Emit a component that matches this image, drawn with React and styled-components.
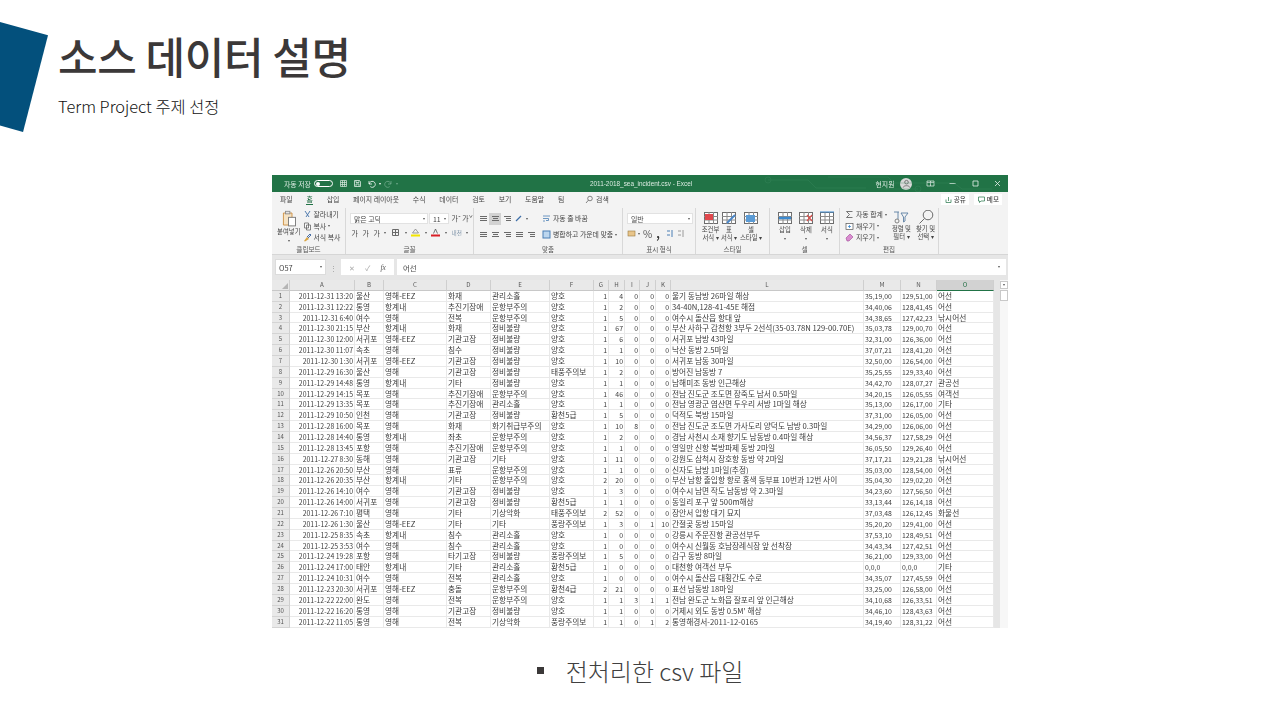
import styled, { createGlobalStyle } from "styled-components";

const GlobalStyle = createGlobalStyle`
  html, body {
    margin: 0;
    background: #fff;
  }
  body {
    font-family: "Noto Sans CJK KR", "Noto Sans", sans-serif;
  }
`;

const Page = styled.div`
  width: 1280px;
  height: 720px;
  overflow: hidden;
  display: flex;
  flex-direction: column;
`;

const Header = styled.header`
  height: 175px;
  padding-top: 22px;
  box-sizing: border-box;
  display: flex;
  align-items: flex-start;
`;

const Logo = styled.div`
  width: 48px;
  height: 110px;
  background: #03507c;
  clip-path: polygon(0 0, 100% 12%, 48% 100%, 0 94%);
`;

const Heading = styled.div`
  margin: 2px 0 0 10px;
  color: #3b3838;
`;

const Title = styled.h1`
  margin: 0;
  font-size: 43px;
  line-height: 62px;
  font-weight: 500;
  letter-spacing: -0.4px;
`;

const Subtitle = styled.p`
  margin: 8px 0 0;
  font-size: 16.4px;
  line-height: 24px;
  font-weight: 300;
  color: #111;
`;

const Window = styled.section`
  width: 736px;
  height: 453px;
  margin: 0 auto;
  flex: none;
  overflow: hidden;
  background: #e6e6e6;
  display: flex;
  flex-direction: column;
  font-size: 6.9px;
  color: #444;
  filter: blur(0.25px);
`;

const TitleBar = styled.div`
  position: relative;
  height: 17px;
  flex: none;
  background: #217346;
  color: #dcebe2;
  display: flex;
  align-items: center;
  padding: 0 6px 0 12px;
`;

const Circuit = styled.svg`
  position: absolute;
  right: 10px;
  top: 0;
  opacity: 0.35;
`;

const TitleLeft = styled.div`
  width: 306px;
  display: flex;
  align-items: center;
  gap: 5px;
`;

const DocName = styled.div`
  flex: 1;
  font-family: "Liberation Sans", sans-serif;
  font-size: 6.4px;
`;

const TitleRight = styled.div`
  display: flex;
  align-items: center;
  gap: 13.5px;
`;

const Toggle = styled.span`
  width: 19px;
  height: 7px;
  margin: 0 1px 0 -2px;
  border: 1px solid #fff;
  border-radius: 5px;
  box-sizing: border-box;
  display: flex;
  align-items: center;
  padding-left: 1px;
  &::before {
    content: "";
    width: 4px;
    height: 4px;
    border-radius: 50%;
    background: #fff;
  }
`;

const Avatar = styled.span`
  width: 12px;
  height: 12px;
  border-radius: 50%;
  background: #d9d9d9;
  margin-left: -8px;
  display: flex;
  align-items: center;
  justify-content: center;
`;

const TabBar = styled.nav`
  height: 14px;
  flex: none;
  background: #f3f3f3;
  display: flex;
  align-items: center;
  padding: 0 6px 0 8px;
  gap: 13.8px;
`;

const Tab = styled.span`
  position: relative;
  color: ${(p) => (p.$active ? "#1e6b41" : "#444")};
  &::after {
    content: "";
    display: ${(p) => (p.$active ? "block" : "none")};
    position: absolute;
    left: 0;
    right: 0;
    bottom: -1px;
    height: 1px;
    background: #217346;
  }
`;

const SearchTab = styled.span`
  margin-left: 7px;
  display: flex;
  align-items: center;
  gap: 2px;
`;

const TabActions = styled.div`
  margin-left: auto;
  display: flex;
  gap: 5px;
`;

const TabAction = styled.span`
  background: #fff;
  padding: 1px 3px 1px 4px;
  line-height: 9px;
  font-size: 6.6px;
  display: flex;
  align-items: center;
  gap: 2px;
  font-weight: 500;
`;

const Ribbon = styled.div`
  height: 48px;
  flex: none;
  background: #f3f3f3;
  display: flex;
  border-bottom: 1px solid #d6d6d6;
`;

const Group = styled.div`
  width: ${(p) => p.$w}px;
  flex: none;
  box-sizing: border-box;
  border-right: 1px solid #d8d8d8;
  margin-top: 2px;
  display: flex;
  flex-direction: column;
`;

const GroupBody = styled.div`
  flex: 1;
  min-height: 0;
  display: flex;
  padding: ${(p) => p.$pad || "3px 3px 0"};
  gap: ${(p) => p.$gap || 0}px;
`;

const GroupLabel = styled.div`
  height: 9px;
  line-height: 9px;
  text-align: center;
  font-size: 6.6px;
  color: #555;
`;

const Column = styled.div`
  display: flex;
  flex-direction: column;
  align-items: ${(p) => p.$align || "flex-start"};
  gap: ${(p) => p.$gap || 0}px;
  width: ${(p) => (p.$w ? `${p.$w}px` : "auto")};
`;

const Row = styled.div`
  display: flex;
  align-items: center;
  gap: ${(p) => p.$gap || 0}px;
  height: ${(p) => (p.$h ? `${p.$h}px` : "auto")};
`;

const Tool = styled.span`
  display: flex;
  align-items: center;
  gap: 2px;
  line-height: 9px;
  white-space: nowrap;
`;

const Pressed = styled.span`
  display: flex;
  align-items: center;
  background: #d2d2d2;
  margin: -2px;
  padding: 2px;
`;

const Percent = styled.span`
  font-size: 10px;
  line-height: 9px;
  color: #555;
  margin-left: 1px;
`;

const Comma = styled.b`
  font-size: 11px;
  line-height: 9px;
  color: #333;
  margin: 0 4px 0 2px;
`;

const Phonetic = styled.span`
  font-size: 5.6px;
  color: #7d93a8;
`;

const BigLabel = styled.div`
  text-align: center;
  font-size: 6.4px;
  line-height: 8.4px;
  white-space: nowrap;
  margin-top: 1px;
`;

const Select = styled.div`
  width: ${(p) => p.$w}px;
  height: 11px;
  box-sizing: border-box;
  background: #fff;
  border: 1px solid #e2e2e2;
  padding: 0 2px 0 3px;
  display: flex;
  align-items: center;
  justify-content: space-between;
`;

const Caret = styled.span`
  display: inline-block;
  width: 0;
  height: 0;
  border-left: 1.5px solid transparent;
  border-right: 1.5px solid transparent;
  border-top: 2px solid #555;
  flex: none;
  vertical-align: middle;
`;

const TitleCaret = styled(Caret)`
  margin: 0 -2px;
  border-top-color: ${(p) => (p.$dim ? "#6fa98a" : "#fff")};
`;

const Spacer = styled.div`
  height: 4px;
  flex: none;
  background: #e6e6e6;
`;

const FormulaBar = styled.div`
  height: 16px;
  flex: none;
  display: flex;
  align-items: stretch;
  gap: 3px;
  padding: 0 2px 0 3px;
  font-size: 7.4px;
`;

const NameBox = styled.div`
  width: 51px;
  background: #fff;
  border: 1px solid #dcdcdc;
  box-sizing: border-box;
  padding: 0 3px;
  display: flex;
  align-items: center;
  justify-content: space-between;
`;

const FormulaGrip = styled.div`
  width: 9px;
  display: flex;
  align-items: center;
  justify-content: center;
  color: #9a9a9a;
`;

const FormulaButtons = styled.div`
  width: 53px;
  background: #fff;
  display: flex;
  align-items: center;
  justify-content: space-around;
  padding: 0 3px;
  box-sizing: border-box;
  color: #aaa;
`;

const FormulaFx = styled.i`
  color: #555;
  font-family: "Liberation Serif", serif;
`;

const FormulaInput = styled.div`
  flex: 1;
  background: #fff;
  padding: 0 6px;
  display: flex;
  align-items: center;
  justify-content: space-between;
`;

const Sheet = styled.div`
  margin-top: 5px;
  flex: 1;
  min-height: 0;
  display: flex;
  background: #fff;
`;

const Grid = styled.div`
  width: 722px;
  flex: none;
  display: grid;
  grid-template-columns: 18px 65px 29px 63px 44px 59px 44px 15px 16px 15px 16px 15px 193px 37px 36px 57px;
  grid-auto-rows: 10.87px;
  align-content: start;
  color: #3c3c3c;
`;

const ColHead = styled.div`
  height: 11px;
  line-height: 10px;
  box-sizing: border-box;
  text-align: center;
  font-size: 6.2px;
  color: ${(p) => (p.$on ? "#1f6d42" : "#555")};
  background: ${(p) => (p.$on ? "#d2d2d2" : "#e9e9e9")};
  border-right: 1px solid #cfcfcf;
  border-bottom: ${(p) => (p.$on ? "1px solid #217346" : "1px solid #c8c8c8")};
`;

const Corner = styled(ColHead)`
  position: relative;
  &::after {
    content: "";
    position: absolute;
    right: 1px;
    bottom: 1px;
    border-left: 6px solid transparent;
    border-bottom: 6px solid #b5b5b5;
  }
`;

const RowHead = styled.div`
  text-align: center;
  font-size: 6px;
  line-height: 10.87px;
  color: #555;
  background: #e9e9e9;
  border-right: 1px solid #cfcfcf;
  border-bottom: 1px solid #d4d4d4;
  box-sizing: border-box;
`;

const Cell = styled.div`
  box-sizing: border-box;
  padding: 0 1px;
  line-height: 10.4px;
  font-size: ${(p) => (p.$digits ? "6.9px" : "7.7px")};
  text-align: ${(p) => (p.$num ? "right" : "left")};
  white-space: nowrap;
  overflow: hidden;
  border-right: 1px solid #e9e9e9;
  border-bottom: 1px solid #e9e9e9;
`;

const ScrollBar = styled.div`
  flex: 1;
  box-sizing: border-box;
  background: #f7f7f7;
  border-left: 6px solid #e6e6e6;
  display: flex;
  flex-direction: column;
  align-items: center;
  padding-top: 1px;
  gap: 1px;
`;

const ScrollButton = styled.div`
  width: 8px;
  height: 8px;
  background: #fff;
  border: 1px solid #c9c9c9;
  box-sizing: border-box;
  display: flex;
  align-items: center;
  justify-content: center;
`;

const ScrollThumb = styled.div`
  width: 8px;
  height: 11px;
  background: #fff;
  border: 1px solid #c9c9c9;
  box-sizing: border-box;
`;

const Caption = styled.div`
  flex: 1;
  display: flex;
  align-items: center;
  justify-content: center;
  gap: 22px;
  padding-bottom: 8px;
  font-size: 24px;
  font-weight: 300;
  color: #404040;
`;

const Bullet = styled.span`
  width: 7px;
  height: 7px;
  background: #3b3838;
`;

const COLUMNS = ["A", "B", "C", "D", "E", "F", "G", "H", "I", "J", "K", "L", "M", "N", "O"];

const ROWS = [
  "2011-12-31 13:20|울산|영해-EEZ|화재|관리소홀|양호|1|4|0|0|0|울기 동남방 26마일 해상|35,19,00|129,51,00|어선",
  "2011-12-31 12:22|통영|항계내|추진기장애|운항부주의|양호|1|2|0|0|0|34-40N,128-41-45E 해점|34,40,06|128,41,45|어선",
  "2011-12-31 6:40|여수|영해|전복|운항부주의|양호|1|5|0|0|0|여수시 돌산읍 항대 앞|34,38,65|127,42,23|낚시어선",
  "2011-12-30 21:15|부산|항계내|화재|정비불량|양호|1|67|0|0|0|부산 사하구 감천항 3부두 2선석(35-03.78N 129-00.70E)|35,03,78|129,00,70|어선",
  "2011-12-30 12:00|서귀포|영해-EEZ|기관고장|정비불량|양호|1|6|0|0|0|서귀포 남방 43마일|32,31,00|126,36,00|어선",
  "2011-12-30 11:07|속초|영해|침수|정비불량|양호|1|1|0|0|0|낙산 동방 2.5마일|37,07,21|128,41,20|어선",
  "2011-12-30 1:30|서귀포|영해-EEZ|기관고장|정비불량|양호|1|10|0|0|0|서귀포 남동 30마일|32,50,00|126,54,00|어선",
  "2011-12-29 16:30|울산|영해|기관고장|정비불량|태풍주의보|1|2|0|0|0|방어진 남동방 7|35,25,55|129,33,40|어선",
  "2011-12-29 14:48|통영|항계내|기타|정비불량|양호|1|1|0|0|0|남해미조 동방 인근해상|34,42,70|128,07,27|관공선",
  "2011-12-29 14:15|목포|영해|추진기장애|운항부주의|양호|1|46|0|0|0|전남 진도군 조도면 장죽도 남서 0.5마일|34,20,15|126,05,55|여객선",
  "2011-12-29 13:35|목포|영해|추진기장애|관리소홀|양호|1|1|0|0|0|전남 영광군 염산면 두우리 서방 1마일 해상|35,13,00|126,17,00|기타",
  "2011-12-29 10:50|인천|영해|기관고장|정비불량|황천5급|1|5|0|0|0|덕적도 북방 15마일|37,31,00|126,05,00|어선",
  "2011-12-28 16:00|목포|영해|화재|화기취급부주의|양호|1|10|8|0|0|전남 진도군 조도면 가사도리 양덕도 남방 0.3마일|34,29,00|126,06,00|어선",
  "2011-12-28 14:40|통영|항계내|좌초|운항부주의|양호|1|2|0|0|0|경남 사천시 소재 향기도 남동방 0.4마일 해상|34,56,37|127,58,29|어선",
  "2011-12-28 13:45|포항|영해|추진기장애|운항부주의|양호|1|1|0|0|0|영일만 신항 북방파제 동방 2마일|36,05,50|129,26,40|어선",
  "2011-12-27 8:30|동해|영해|기관고장|기타|양호|1|11|0|0|0|강원도 삼척시 장호항 동방 약 2마일|37,17,21|129,21,28|낚시어선",
  "2011-12-26 20:50|부산|영해|표류|운항부주의|양호|1|1|0|0|0|신자도 남방 1마일(추정)|35,03,00|128,54,00|어선",
  "2011-12-26 20:35|부산|항계내|기타|운항부주의|양호|2|20|0|0|0|부산 남항 출입항 항로 홍색 동부표 10번과 12번 사이|35,04,30|129,02,20|어선",
  "2011-12-26 14:10|여수|영해|기관고장|정비불량|양호|1|3|0|0|0|여수시 남면 작도 남동방 약 2.3마일|34,23,60|127,56,50|어선",
  "2011-12-26 14:00|서귀포|영해|기관고장|정비불량|황천5급|1|1|0|0|0|동일리 포구 앞 500m해상|33,13,44|126,14,18|어선",
  "2011-12-26 7:10|평택|영해|기타|기상악화|태풍주의보|2|52|0|0|0|장안서 입항 대기 묘지|37,03,48|126,12,45|화물선",
  "2011-12-26 1:30|울산|영해-EEZ|기타|기타|풍랑주의보|1|3|0|1|10|간절곶 동방 15마일|35,20,20|129,41,00|어선",
  "2011-12-25 8:35|속초|항계내|침수|관리소홀|양호|1|0|0|0|0|강릉시 주문진항 관공선부두|37,53,10|128,49,51|어선",
  "2011-12-25 3:53|여수|영해|침수|관리소홀|양호|1|0|0|0|0|여수시 신월동 호남장례식장 앞 선착장|34,43,34|127,42,51|어선",
  "2011-12-24 19:28|포항|영해|타기고장|정비불량|풍랑주의보|1|5|0|0|0|감구 동방 8마일|36,21,00|129,33,00|어선",
  "2011-12-24 17:00|태안|항계내|기타|관리소홀|황천5급|1|0|0|0|0|대천항 여객선 부두|0,0,0|0,0,0|기타",
  "2011-12-24 10:31|여수|영해|전복|관리소홀|양호|1|0|0|0|0|여수시 돌산읍 대횡간도 수로|34,35,07|127,45,59|어선",
  "2011-12-23 20:30|서귀포|영해-EEZ|충돌|운항부주의|황천4급|2|21|0|0|0|표선 남동방 18마일|33,25,00|126,58,00|어선",
  "2011-12-22 22:00|완도|영해|전복|운항부주의|양호|1|1|3|1|1|전남 완도군 노화읍 잘포리 앞 인근해상|34,10,68|126,33,51|어선",
  "2011-12-22 16:20|통영|영해|기관고장|정비불량|양호|1|1|0|0|0|거제시 외도 동방 0.5M' 해상|34,46,10|128,43,63|어선",
  "2011-12-22 11:05|통영|영해|전복|기상악화|풍랑주의보|1|1|0|1|2|통영해경서-2011-12-0165|34,19,40|128,31,22|어선",
].map((row) => row.split("|"));

const NUMERIC = new Set([0, 6, 7, 8, 9, 10]);
const DIGITS = new Set([0, 6, 7, 8, 9, 10, 12, 13]);

// ribbon drawings, all on a small pixel box
const Ico = ({ w = 9, h = 9, children }) => (
  <svg width={w} height={h} viewBox={`0 0 ${w} ${h}`} fill="none">
    {children}
  </svg>
);

const CellGrid = ({ fill, accent }) => (
  <Ico w={16} h={14}>
    <rect x="1.5" y="1.5" width="13" height="11" fill={fill || "#fff"} stroke="#6d6d6d" />
    <path d="M1 5.5h14M1 9h14M6 1v12M10.5 1v12" stroke="#8a8a8a" />
    {accent}
  </Ico>
);

const Lines = ({ kind = "left" }) => {
  const x = { left: [1, 1, 1], center: [1, 2, 1], right: [1, 3, 3] }[kind];
  return (
    <Ico w={8} h={8}>
      <path d={`M${x[0]} 1.5h7M${x[1]} 3.5h${8 - x[1] - (kind === "center" ? 1 : 0)}M${x[2]} 5.5h7`} stroke="#6a6a6a" />
    </Ico>
  );
};

const SmallGrid = () => (
  <Ico>
    <path d="M1.5 1.5h6v6h-6zM1.5 4.5h6M4.5 1.5v6" stroke="#6b6b6b" />
  </Ico>
);

export default function App() {
  return (
    <Page>
      <GlobalStyle />
      <Header>
        <Logo />
        <Heading>
          <Title>소스 데이터 설명</Title>
          <Subtitle>Term Project 주제 선정</Subtitle>
        </Heading>
      </Header>

      <Window>
        <TitleBar>
          <Circuit width="240" height="17" viewBox="0 0 240 17" fill="none">
            <path d="M10 5h40l8 8h50M70 2h60l6 6h60l8 6h30M120 14h40" stroke="#3d8a60" />
            <circle cx="10" cy="5" r="3" stroke="#3d8a60" />
            <circle cx="160" cy="14" r="3" stroke="#3d8a60" />
          </Circuit>
          <TitleLeft>
            <span>자동 저장</span>
            <Toggle />
            <Ico>
              <path d="M1.5 1.5h6v6h-6zM3.5 1.5v6M5.5 1.5v6M1.5 3.5h6M1.5 5.5h6" stroke="#dcebe2" strokeWidth=".7" />
            </Ico>
            <Ico>
              <path d="M1.5 1.5h5l1 1v5h-6zM3 1.5v2h3v-2M3 7.5v-2.5h3v2.5" stroke="#dcebe2" strokeWidth=".8" />
            </Ico>
            <Ico>
              <path d="M2 2v3h3M2.3 5a3 3 0 1 1 1 2.6" stroke="#fff" strokeWidth=".8" />
            </Ico>
            <TitleCaret />
            <Ico>
              <path d="M7 2v3h-3M6.7 5a3 3 0 1 0-1 2.6" stroke="#6fa98a" strokeWidth=".8" />
            </Ico>
            <TitleCaret $dim />
          </TitleLeft>
          <DocName>2011-2018_sea_incident.csv  -  Excel</DocName>
          <TitleRight>
            <span>현지원</span>
            <Avatar>
              <Ico>
                <circle cx="4.5" cy="3.2" r="1.8" stroke="#777" />
                <path d="M1.2 8.5c.5-2.4 6-2.4 6.6 0" stroke="#777" />
              </Ico>
            </Avatar>
            <Ico>
              <path d="M1 2h7v5H1zM4.5 2v5M1 3.5h7" stroke="#e8f1ec" strokeWidth=".7" />
            </Ico>
            <Ico>
              <path d="M1.5 4.5h6" stroke="#e8f1ec" strokeWidth=".8" />
            </Ico>
            <Ico>
              <path d="M2 2h5v5H2z" stroke="#e8f1ec" strokeWidth=".8" />
            </Ico>
            <Ico>
              <path d="M2 2l5 5M7 2l-5 5" stroke="#e8f1ec" strokeWidth=".8" />
            </Ico>
          </TitleRight>
        </TitleBar>

        <TabBar>
          <Tab>파일</Tab>
          <Tab $active>홈</Tab>
          <Tab>삽입</Tab>
          <Tab>페이지 레이아웃</Tab>
          <Tab>수식</Tab>
          <Tab>데이터</Tab>
          <Tab>검토</Tab>
          <Tab>보기</Tab>
          <Tab>도움말</Tab>
          <Tab>팀</Tab>
          <SearchTab>
            <Ico>
              <circle cx="5" cy="3.5" r="2.3" stroke="#666" strokeWidth=".8" />
              <path d="M3.4 5.2L1 8" stroke="#666" strokeWidth=".8" />
            </Ico>
            검색
          </SearchTab>
          <TabActions>
            <TabAction>
              <Ico w={7} h={7}>
                <path d="M1 3.5v3h5v-3M3.5 5V1" stroke="#217346" strokeWidth=".7" />
              </Ico>
              공유
            </TabAction>
            <TabAction>
              <Ico w={7} h={7}>
                <path d="M.5 1h6v4H3L1.5 6.5V5h-1z" stroke="#217346" strokeWidth=".7" />
              </Ico>
              메모
            </TabAction>
          </TabActions>
        </TabBar>

        <Ribbon>
          <Group $w={74}>
            <GroupBody $gap={2} $pad="2px 1px 0 5px">
              <Column $align="center">
                <svg width="16" height="20" viewBox="0 0 16 20" fill="none">
                  <path d="M1.5 3.5h10v14h-10z" fill="#f6e3c4" stroke="#c98b3a" />
                  <rect x="4" y="1.5" width="5" height="3" fill="#e4e4e4" stroke="#8b8b8b" />
                  <rect x="7.5" y="8.5" width="8" height="10" fill="#fff" stroke="#6f6f6f" />
                </svg>
                <BigLabel>
                  붙여넣기
                  <br />
                  <Caret />
                </BigLabel>
              </Column>
              <Column $gap={2.6}>
                <Tool>
                  <Ico>
                    <path d="M2 1l4 6M7 1L3 7" stroke="#3f6fa8" strokeWidth=".9" />
                  </Ico>
                  잘라내기
                </Tool>
                <Tool>
                  <Ico>
                    <path d="M1.5 1h4v5h-4zM3.5 3h4v5h-4z" stroke="#666" strokeWidth=".8" fill="#fff" />
                  </Ico>
                  복사
                  <Caret />
                </Tool>
                <Tool>
                  <Ico>
                    <path d="M1 8l3-4 2 2-4 2.5z" fill="#d9a441" />
                    <path d="M4 4l3-3 1 1-3 3" stroke="#4a6fa5" />
                  </Ico>
                  서식 복사
                </Tool>
              </Column>
            </GroupBody>
            <GroupLabel>클립보드</GroupLabel>
          </Group>

          <Group $w={128}>
            <GroupBody $pad="5px 4px 0 4px">
              <Column $gap={4}>
                <Row $gap={1}>
                  <Select $w={78}>
                    맑은 고딕
                    <Caret />
                  </Select>
                  <Select $w={20}>
                    11
                    <Caret />
                  </Select>
                  <Tool>&nbsp;가ˆ 가ˇ</Tool>
                </Row>
                <Row $gap={4.6} $h={9}>
                  <span>&nbsp;가</span>
                  <span>가</span>
                  <span>가</span>
                  <Caret />
                  <SmallGrid />
                  <Caret />
                  <Ico>
                    <path d="M4.5 1L7.5 5H1.5z" stroke="#777" strokeWidth=".7" />
                    <rect y="6.5" width="9" height="2" fill="#f3e500" />
                  </Ico>
                  <Caret />
                  <Ico>
                    <path d="M2.5 5.5L4.5 1l2 4.5" stroke="#555" strokeWidth=".8" />
                    <rect y="6.5" width="9" height="2" fill="#d91f26" />
                  </Ico>
                  <Caret />
                  <Phonetic>내천</Phonetic>
                  <Caret />
                </Row>
              </Column>
            </GroupBody>
            <GroupLabel>글꼴</GroupLabel>
          </Group>

          <Group $w={149}>
            <GroupBody $pad="6px 4px 0 5px" $gap={7}>
              <Column $gap={7}>
                <Row $gap={4} $h={9}>
                  <Lines />
                  <Pressed>
                    <Lines kind="center" />
                  </Pressed>
                  <Lines kind="right" />
                  <Tool>
                    <Ico>
                      <path d="M1 7L6 2" stroke="#3f6fa8" strokeWidth="1.2" />
                    </Ico>
                    <Caret />
                  </Tool>
                </Row>
                <Row $gap={4} $h={9}>
                  <Lines />
                  <Lines kind="center" />
                  <Lines kind="right" />
                  <Lines />
                  <Lines kind="right" />
                </Row>
              </Column>
              <Column $gap={7}>
                <Tool>
                  <Ico>
                    <path d="M1 2h7M1 4.5h5.5v2H4M1 7h2" stroke="#4a7fb5" strokeWidth=".8" />
                  </Ico>
                  자동 줄 바꿈
                </Tool>
                <Tool>
                  <Ico>
                    <rect x="1" y="1" width="7" height="7" fill="#bcd6ee" stroke="#4a7fb5" />
                  </Ico>
                  병합하고 가운데 맞춤
                  <Caret />
                </Tool>
              </Column>
            </GroupBody>
            <GroupLabel>맞춤</GroupLabel>
          </Group>

          <Group $w={73}>
            <GroupBody $pad="5px 3px 0 4px">
              <Column $gap={5}>
                <Select $w={66}>
                  일반
                  <Caret />
                </Select>
                <Row $gap={2} $h={9}>
                  <Ico>
                    <rect x="1" y="2" width="7" height="5" fill="#e8c58a" stroke="#9a7a3f" strokeWidth=".6" />
                  </Ico>
                  <Caret />
                  <Percent>%</Percent>
                  <Comma>,</Comma>
                  <Ico>
                    <path d="M1 2h3M1 6h3M6 1v7" stroke="#4a7fb5" />
                  </Ico>
                  <Ico>
                    <path d="M1 2h3M1 6h3M6 1v7" stroke="#9a9a9a" />
                  </Ico>
                </Row>
              </Column>
            </GroupBody>
            <GroupLabel>표시 형식</GroupLabel>
          </Group>

          <Group $w={74}>
            <GroupBody $pad="3px 0 0 5px" $gap={2}>
              <Column $align="center" $w={19}>
                <CellGrid accent={<rect x="2" y="3" width="8" height="6" fill="#e0474c" />} />
                <BigLabel>
                  조건부
                  <br />
                  서식 ▾
                </BigLabel>
              </Column>
              <Column $align="center" $w={14}>
                <CellGrid accent={<path d="M6 12l8-8" stroke="#4a86c8" strokeWidth="2" />} />
                <BigLabel>
                  표
                  <br />
                  서식 ▾
                </BigLabel>
              </Column>
              <Column $align="center" $w={26}>
                <CellGrid accent={<rect x="3" y="4" width="9" height="7" fill="#5b9bd5" />} />
                <BigLabel>
                  셀
                  <br />
                  스타일 ▾
                </BigLabel>
              </Column>
            </GroupBody>
            <GroupLabel>스타일</GroupLabel>
          </Group>

          <Group $w={70}>
            <GroupBody $pad="3px 2px 0 7px" $gap={5}>
              <Column $align="center">
                <CellGrid accent={<path d="M2 7h12" stroke="#3c8ad0" strokeWidth="2.4" />} />
                <BigLabel>
                  삽입
                  <br />
                  <Caret />
                </BigLabel>
              </Column>
              <Column $align="center">
                <CellGrid accent={<path d="M9 4l5 6M14 4l-5 6" stroke="#d9534f" strokeWidth="1.2" />} />
                <BigLabel>
                  삭제
                  <br />
                  <Caret />
                </BigLabel>
              </Column>
              <Column $align="center">
                <CellGrid accent={<path d="M1 1h14" stroke="#3c8ad0" />} />
                <BigLabel>
                  서식
                  <br />
                  <Caret />
                </BigLabel>
              </Column>
            </GroupBody>
            <GroupLabel>셀</GroupLabel>
          </Group>

          <Group $w={99}>
            <GroupBody $pad="2px 1px 0 5px" $gap={5}>
              <Column $gap={2.5}>
                <Tool>
                  <Ico>
                    <path d="M7.5 1.5h-6l3 3-3 3h6" stroke="#555" strokeWidth=".8" />
                  </Ico>
                  자동 합계
                  <Caret />
                </Tool>
                <Tool>
                  <Ico>
                    <rect x="1" y="1.5" width="7" height="6" fill="#fff" stroke="#555" strokeWidth=".7" />
                    <path d="M4.5 3v3M3 4.5h3" stroke="#3c8ad0" strokeWidth=".8" />
                  </Ico>
                  채우기
                  <Caret />
                </Tool>
                <Tool>
                  <Ico>
                    <path d="M1 5l4-4 3 3-4 4H2z" fill="#d98ccf" stroke="#a04a98" strokeWidth=".6" />
                  </Ico>
                  지우기
                  <Caret />
                </Tool>
              </Column>
              <Column $align="center">
                <svg width="16" height="14" viewBox="0 0 16 14" fill="none">
                  <path d="M1 2h5M5 2v7M8 3h7l-3 4v4l-1.5 1V7z" stroke="#5c7fa3" strokeWidth=".9" />
                  <circle cx="4" cy="11" r="2" stroke="#666" strokeWidth=".8" />
                </svg>
                <BigLabel>
                  정렬 및
                  <br />
                  필터 ▾
                </BigLabel>
              </Column>
              <Column $align="center">
                <svg width="16" height="14" viewBox="0 0 16 14" fill="none">
                  <circle cx="10" cy="5" r="4.8" stroke="#6a6a6a" />
                  <path d="M6.5 8.5L1.5 13.5" stroke="#6a6a6a" />
                </svg>
                <BigLabel>
                  찾기 및
                  <br />
                  선택 ▾
                </BigLabel>
              </Column>
            </GroupBody>
            <GroupLabel>편집</GroupLabel>
          </Group>
        </Ribbon>

        <Spacer />

        <FormulaBar>
          <NameBox>
            O57
            <Caret />
          </NameBox>
          <FormulaGrip>⋮</FormulaGrip>
          <FormulaButtons>
            <span>✕</span>
            <span>✓</span>
            <FormulaFx>fx</FormulaFx>
          </FormulaButtons>
          <FormulaInput>
            어선
            <Caret />
          </FormulaInput>
        </FormulaBar>

        <Sheet>
          <Grid>
            <Corner />
            {COLUMNS.map((name) => (
              <ColHead key={name} $on={name === "O"}>
                {name}
              </ColHead>
            ))}
            {ROWS.map((row, r) => [
              <RowHead key={`h${r}`}>{r + 1}</RowHead>,
              ...row.map((value, c) => (
                <Cell key={`${r}-${c}`} $num={NUMERIC.has(c)} $digits={DIGITS.has(c)}>
                  {value}
                </Cell>
              )),
            ])}
          </Grid>
          <ScrollBar>
            <ScrollButton>
              <Caret />
            </ScrollButton>
            <ScrollThumb />
          </ScrollBar>
        </Sheet>
      </Window>

      <Caption>
        <Bullet />
        <span>전처리한 csv 파일</span>
      </Caption>
    </Page>
  );
}
